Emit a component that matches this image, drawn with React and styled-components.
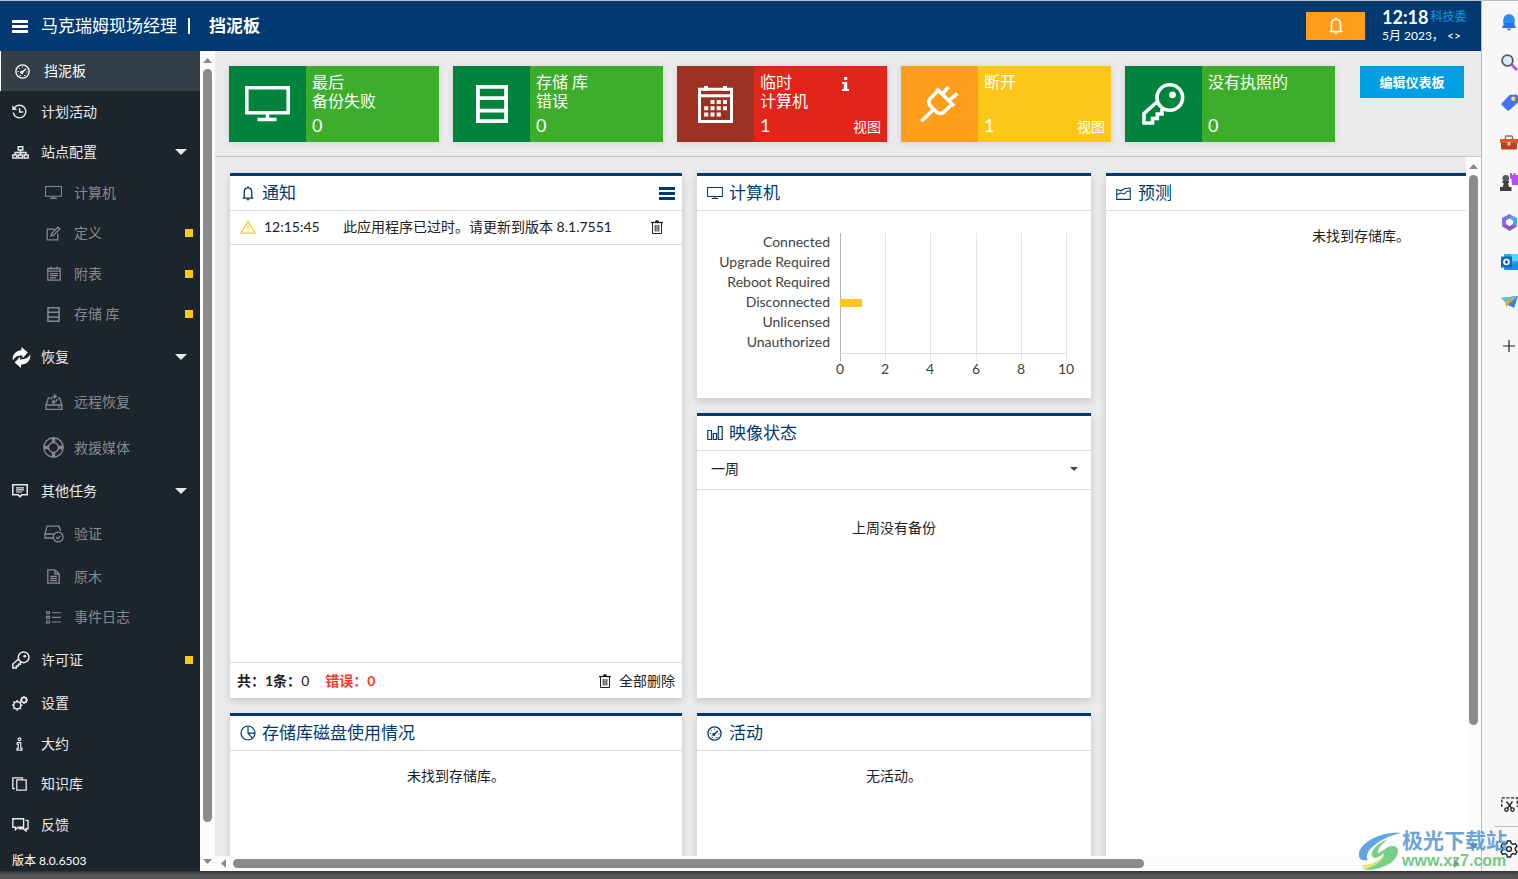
import React from 'react'
import styled, { createGlobalStyle, css } from 'styled-components'

const GlobalStyle = createGlobalStyle`
    * {
        box-sizing: border-box;
    }
    body {
        margin: 0;
        overflow: hidden;
        font-family: Lato, "Noto Sans CJK SC", sans-serif;
        font-size: 14px;
        line-height: 20px;
        color: #212121;
    }
    button, select {
        font-family: inherit;
        font-size: inherit;
        color: inherit;
        background: none;
        border: 0;
        padding: 0;
        cursor: pointer;
    }
    a {
        color: inherit;
        text-decoration: none;
    }
    svg {
        display: block;
        flex: none;
    }
`

const Page = styled.div`
    height: 100vh;
    display: flex;
    flex-direction: column;
    background: #555;
    padding-bottom: 8px;
`

const Window = styled.div`
    flex: 1;
    min-height: 0;
    display: flex;
    border-top: 1px solid #b9c0c8;
    box-shadow: 0 1px 3px #222;
`

const Site = styled.div`
    flex: 1;
    min-width: 0;
    display: flex;
    flex-direction: column;
    background: #eaebed;
`

const Header = styled.header`
    height: 50px;
    flex: none;
    display: flex;
    align-items: center;
    padding: 0 14px 0 12px;
    background: #003a70;
    color: #fff;
`

const Product = styled.span`
    margin-left: 13px;
    font-size: 17px;
`

const Divider = styled.span`
    width: 2px;
    height: 16px;
    margin: 0 19px 0 11px;
    background: #fff;
`

const PageTitle = styled.h1`
    margin: 0;
    font-size: 17px;
    line-height: 20px;
    font-weight: 700;
`

const AlertButton = styled.button`
    width: 59px;
    height: 28px;
    margin-left: auto;
    display: flex;
    align-items: center;
    justify-content: center;
    background: #ff9e1b;
    color: #fff;
`

const Clock = styled.div`
    width: 85px;
    margin-left: 17px;
    padding-top: 2px;
    font-size: 12px;
    line-height: 20px;
    white-space: nowrap;
`

const Time = styled.div`
    display: flex;
    align-items: center;
    gap: 2px;
    line-height: 18px;
    color: #009fe3;

    strong {
        font-size: 18px;
        color: #fff;
    }
`

const Columns = styled.div`
    flex: 1;
    min-height: 0;
    display: flex;
`

const Sidebar = styled.nav`
    width: 200px;
    flex: none;
    display: flex;
    flex-direction: column;
    overflow: hidden;
    background: #1d252c;
    color: #e8e9ea;
`

const NavLink = styled.a`
    flex: 1 0 ${(p) => (p.$tall ? 45 : 40)}px;
    display: flex;
    align-items: center;
    padding: 0 7px 0 ${(p) => (p.$sub ? 44 : 12)}px;
    color: ${(p) => (p.$sub ? '#85898c' : '#e8e9ea')};
    ${(p) =>
        p.$active &&
        css`
            padding-left: 14px;
            border-left: 1px solid #fff;
            background: #333f48;
            color: #fff;
        `}
`

const NavIcon = styled.span`
    flex: none;
    display: flex;
    ${(p) => (p.$sub ? 'width: 19px; margin-right: 11px; justify-content: center;' : 'width: 29px;')}
`

const Marker = styled.span`
    width: 8px;
    height: 8px;
    margin-left: auto;
    background: #ffc61a;
`

const Caret = styled.span`
    margin: 0 6px 0 auto;
    border: 6px solid transparent;
    border-top-color: #e8e9ea;
    border-bottom: 0;
`

const Version = styled.div`
    height: 26px;
    flex: none;
    padding: 6px 12px 0;
    font-size: 12px;
    color: #fff;
`

const Bar = styled.div`
    flex: none;
    display: flex;
    align-items: center;
    justify-content: space-between;
    background: #fcfcfc;
    ${(p) =>
        p.$horizontal
            ? 'height: 15px; padding: 0 20px 0 4px;'
            : 'width: 15px; flex-direction: column; padding: 7px 0;'}
`

const Track = styled.div`
    flex: 1;
    display: flex;
    ${(p) => (p.$horizontal ? 'margin: 0 5px;' : 'flex-direction: column; margin: 6px 0;')}
`

const Thumb = styled.div`
    border-radius: 5px;
    background: #8b8b8b;
    ${(p) => (p.$horizontal ? 'height: 9px; width: ' : 'width: 9px; height: ')}${(p) => p.$size};
`

const Main = styled.main`
    flex: 1;
    min-width: 0;
    display: flex;
    flex-direction: column;
`

const Summary = styled.section`
    height: 106px;
    flex: none;
    display: flex;
    justify-content: space-between;
    padding: 15px 17px 0 14px;
    border-bottom: 1px solid #c9cbcd;
`

const Tiles = styled.div`
    display: flex;
    gap: 14px;
`

const Tile = styled.article`
    width: 210px;
    height: 76px;
    display: flex;
    color: #fff;
    background: ${(p) => p.$color};
    box-shadow: 0 1px 8px rgba(0, 0, 0, 0.1);
`

const TileIcon = styled.div`
    width: 77px;
    flex: none;
    display: flex;
    align-items: center;
    justify-content: center;
    background: ${(p) => p.$color};
`

const TileBody = styled.div`
    flex: 1;
    display: flex;
    flex-direction: column;
    justify-content: space-between;
    padding: 6px 6px 5px;
`

const TileTop = styled.div`
    display: flex;
    justify-content: space-between;
    padding-right: 32px;
    font-size: 16px;
    line-height: 19px;
    white-space: pre-line;

    svg {
        margin-top: 5px;
    }
`

const TileBottom = styled.div`
    height: 20px;
    display: flex;
    justify-content: space-between;
    align-items: flex-start;

    span {
        font-size: 18px;
        line-height: 16px;
    }
`

const EditButton = styled.button`
    width: 104px;
    height: 32px;
    background: #009fe3;
    color: #fff;
    font-size: 13px;
    line-height: 20px;
    font-weight: 700;
`

const Board = styled.div`
    flex: 1;
    min-height: 0;
    display: flex;
`

const Scroller = styled.div`
    flex: 1;
    min-width: 0;
    overflow: hidden;
    padding: 16px 15px 0;
`

const Grid = styled.div`
    display: grid;
    grid-template-columns: minmax(452px, 37%) minmax(394px, 32%) minmax(510px, 41%);
    gap: 15px;
`

const Stack = styled.div`
    display: flex;
    flex-direction: column;
    gap: 15px;
`

const Card = styled.section`
    height: ${(p) => p.$height}px;
    display: flex;
    flex-direction: column;
    background: #fff;
    border-top: 3px solid #003a70;
    box-shadow: 0 3px 8px rgba(0, 0, 0, 0.16);
`

const CardHead = styled.header`
    height: 35px;
    flex: none;
    display: flex;
    align-items: center;
    gap: 6px;
    padding: 0 7px 0 9px;
    border-bottom: 1px solid #dcddde;
    color: #003a70;

    h2 {
        margin: 0;
        font-size: 17px;
        line-height: 20px;
        font-weight: 400;
    }
    button {
        margin-left: auto;
    }
`

const HeadIcon = styled.span`
    width: 17px;
    display: flex;
    justify-content: center;
`

const Notice = styled.div`
    height: 34px;
    display: flex;
    align-items: center;
    padding: 0 19px 2px 10px;
    border-bottom: 1px solid #dcddde;

    time {
        width: 79px;
        margin-left: 8px;
    }
    button {
        margin-left: auto;
    }
`

const Totals = styled.footer`
    height: 36px;
    margin-top: auto;
    display: flex;
    align-items: center;
    padding: 0 7px;
    border-top: 1px solid #dcddde;

    b {
        font-weight: 700;
    }
`

const Errors = styled.b`
    margin-left: 16px;
    color: #ff3b30;
`

const ClearButton = styled.button`
    margin-left: auto;
    display: flex;
    align-items: center;
    gap: 8px;
    line-height: 20px;
`

const Empty = styled.p`
    margin: 0;
    padding-top: ${(p) => (p.$roomy ? 28 : 15)}px;
    text-align: center;
`

const Period = styled.div`
    height: 39px;
    display: flex;
    align-items: center;
    padding: 0 13px 2px 14px;
    border-bottom: 1px solid #dcddde;

    select {
        flex: 1;
        height: 20px;
        line-height: 20px;
        appearance: none;
        outline: 0;
    }
    span {
        border: 4px solid transparent;
        border-top-color: #444;
        border-bottom: 0;
    }
`

const ChartSvg = styled.svg`
    align-self: center;
    font-size: 14px;
    fill: #424242;
`

const BrowserBar = styled.aside`
    width: 37px;
    flex: none;
    display: flex;
    flex-direction: column;
    overflow: hidden;
    padding: 1px 0 2px 18px;
    background: #f7f7f7;
    border-left: 1px solid #bdbdbd;
`

const BrowserButton = styled.button`
    width: 18px;
    height: 40px;
    margin-top: ${(p) => (p.$apart ? 4 : 0)}px;
    flex: none;
    display: flex;
    align-items: center;
    justify-content: center;
    color: #222;
`

const Spacer = styled.div`
    flex: 1;
`

const Rule = styled.div`
    height: 1px;
    flex: none;
    margin: 2px 0 2px -5px;
    background: #bdbdbd;
`

const Watermark = styled.div`
    position: absolute;
    right: 11px;
    bottom: 8px;
    display: flex;
    align-items: center;
    opacity: 0.8;
    pointer-events: none;
`

const WatermarkText = styled.div`
    font-family: "Liberation Sans", "Noto Sans CJK SC", sans-serif;
    line-height: 20px;
    white-space: nowrap;

    b {
        display: block;
        font-size: 21px;
        font-weight: 700;
        color: #4a8fd0;
    }
    span {
        display: block;
        font-size: 16px;
        font-weight: 700;
        color: #52bd6c;
    }
`

// every drawing: [width, height, stroke width, content]
const drawings = {
    menu: [16, 13, 3, <path d="M0 1.5H16M0 6.5H16M0 11.5H16" />],
    bell: [14, 18, 1.6, <><path d="M.5 14.5H13.5M2.5 14.5V7.2C2.5 4.2 4.5 2.2 7 2.2S11.5 4.2 11.5 7.2V14.5M7 .3V2" /><path d="M5 15.5H9L7 17.6Z" fill="currentColor" stroke="none" /></>],
    gauge: [15, 15, 1.3, <><circle cx="7.5" cy="7.5" r="6.6" /><path d="M7.2 8.2L11 4.8" /><circle cx="6.8" cy="8.4" r="1" /><path d="M2.6 7.5H3.8M11.4 8H12.5M7.5 2.5V3.6M4 4L4.7 4.7M4.6 11.4H6M9 11.4H10.4" strokeWidth="1" /></>],
    history: [15, 15, 1.4, <><path d="M2.1 4.3A6.3 6.3 0 1 1 1.3 8.6M7.6 4V8H11.2" /><path d="M.3 1.2V6H5.2Z" fill="currentColor" stroke="none" /></>],
    sitemap: [17, 13, 1.4, <path d="M6.2.8H10.8V4H6.2ZM8.5 4V9M3 9V6.5H14V9M.8 9H4.8V12H.8ZM6.5 9H10.5V12H6.5ZM12.2 9H16.2V12H12.2Z" />],
    monitor: [45, 36, 3.6, <path d="M1.8 1.8H43.2V26.8H1.8ZM22.5 27V33M12.5 33.5H31.5" />],
    screen: [17, 13, 1.1, <path d="M.5 .5H16.5V10.2H.5ZM8.5 10.5V12M5 12.4H12" />],
    edit: [15, 15, 1.3, <path d="M8.5 3.2H1.2V13.8H11.8V7.5M5 10L5.8 7.3L12 1.2L13.8 3L7.6 9.2Z" />],
    schedule: [14, 15, 1.3, <path d="M.8 2.5H13.2V14.2H.8ZM.8 5.2H13.2M4 .5V3.5M10 .5V3.5M3 7.7H11M3 9.7H11M3 11.8H9" />],
    storage: [32, 38, 3.8, <path d="M1.9 1.9H30.1V36.1H1.9ZM1.9 13.2H30.1M1.9 25.6H30.1" />],
    restore: [19, 21, 1, <path d="M9.5 0L15.8 5.6L10.5 11.2V8.6C6.5 8.3 3 9.5 .8 13.5C0 8 3.5 3.8 9.5 3.3ZM9 21L2.7 15.4L8 9.8V12.4C12.5 12.5 15.8 11.5 18.2 7.5C19 13 15.5 17.3 9 17.7Z" fill="#fff" stroke="none" />],
    drive: [18, 16, 1.3, <path d="M5 3.8H3.5L1 11V15.3H17V11L14.5 3.8H13M1 11H17M13.3 13.2H15M6 5.5C6 3.5 7.5 2.4 10 2.4M9 .4L11.2 2.4L9 4.4M12 5C12 7 10.5 8 8.3 8M9.3 6L7.2 8L9.3 10" />],
    lifebuoy: [21, 21, 1.4, <><circle cx="10.5" cy="10.5" r="9.7" /><circle cx="10.5" cy="10.5" r="5" /><path d="M10.5 1V5.5M10.5 15.5V20M1 10.5H5.5M15.5 10.5H20" strokeWidth="3.4" /></>],
    tasks: [16, 14, 1.5, <><path d="M.8.8H15.2V10.8H9.8L8 12.8L6.2 10.8H.8Z" /><path d="M4 3.8H12M4 5.9H12M4 8H10" strokeWidth="1.2" /></>],
    verify: [20, 18, 1.3, <><path d="M9 13H1V9L3 1.2H15L16.6 6M1 9H9.5" /><circle cx="14.2" cy="12" r="4.9" /><path d="M12 12L13.7 13.7L16.6 10.6" /></>],
    file: [13, 15, 1.3, <path d="M.8.8H8L12.2 5V14.2H.8ZM8 .8V5H12.2M3.2 7.4H9.8M3.2 9.5H9.8M3.2 11.6H9.8" />],
    list: [15, 13, 1.1, <path d="M.6 .8H3.6V2.8H.6ZM.6 5.4H3.6V7.4H.6ZM.6 10H3.6V12H.6ZM6 1.8H15M6 6.4H15M6 11H15" />],
    key: [43, 42, 3.6, <><circle cx="27.8" cy="14.5" r="12.8" /><circle cx="30.5" cy="11.8" r="3.4" fill="currentColor" stroke="none" /><path d="M15.5 18.5L2 30.5V40H10.5V35.5H15.3V31H20V26" /></>],
    gears: [16, 15, 1.5, <><circle cx="5.2" cy="9.3" r="3.6" /><circle cx="12" cy="4" r="2.5" /><path d="M5.2 4V5.4M5.2 13.2V14.7M0 9.3H1.4M9 9.3H10.4M1.5 5.6L2.6 6.7M7.8 12L8.9 13M8.9 5.6L7.8 6.7M1.5 13L2.6 12M12 0V1.3M12 6.7V8M8 4H9.3M14.7 4H16M9.3 1.2L10.2 2.1M13.8 6L14.7 6.8M14.7 1.2L13.8 2.1" /></>],
    infoOutline: [15, 14, 1.2, <><circle cx="7.5" cy="2.2" r="1.4" /><path d="M5.2 5.6H8.8V11.3H10V13.2H5V11.3H6.2V7.4H5.2Z" /></>],
    info: [7, 14, 1, <path d="M2 0H5.2V3H2ZM0 5H5.2V12H7V14H0V12H1.8V7H0Z" fill="currentColor" stroke="none" />],
    copy: [15, 14, 1.3, <path d="M4.8 2.8H14.2V13.2H4.8ZM3 11.6H.8V.8H10.5V2.6" />],
    chat: [17, 14, 1.4, <path d="M.8.8H11.6V9.2H6L3.4 11.6V9.2H.8ZM13.4 2.4H16V10.8H14V13L11.4 10.8H6.5" />],
    warning: [16, 14, 1.2, <path d="M8 1.2L15 13.2H1ZM8 5.2V9.6M8 10.7V12" />],
    trash: [12, 14, 1, <><path d="M0 2.5H12" strokeWidth="1.3" /><path d="M1.5 3V13.5H10.5V3M4.2 5V11.5M6 5V11.5M7.8 5V11.5" /><path d="M3.8 2.5L4.8 .2H7.2L8.2 2.5Z" fill="currentColor" stroke="none" /></>],
    calendar: [35, 37, 3, <><path d="M1.5 3.2H33.5V35.5H1.5ZM1.5 9.8H33.5" /><path d="M8 0V5M27 0V5" strokeWidth="4" /><path d="M12.5 16H29M6.2 22.3H29M6.2 28.6H23" strokeWidth="4" strokeDasharray="4 2.3" /></>],
    plug: [39, 38, 3.6, <path d="M16.5 3.5L34 21M18.5 5.5L10.3 13.5Q7 17 10.3 20.8L16.5 27Q20.3 30 24 27L32 19M13.5 24.5L1.3 36.3M22.3 9L28.5 1.8M29 15.3L37.3 8.5" />],
    bars: [16, 15, 1.2, <path d="M.8 4.5H4.5V13.5H.8ZM6.3 7.5H9.5V13.5H6.3ZM11.3 .6H15.2V13.5H11.3Z" />],
    forecast: [15, 13, 1.1, <path d="M.8 2.5L5 3.8L9 1.5L14.2 1V12.4H.8ZM.8 8L4.2 6L8.5 7L10.8 4.2L14.2 4" />],
    pie: [16, 16, 1.2, <><circle cx="8" cy="8" r="7" /><path d="M8 1V8.2H15M8 8.2L12.6 13.3" /></>],
    plus: [12, 12, 1.2, <path d="M0 6H12M6 0V12" />],
    snip: [17, 15, 1.3, <><path d="M.8 10V.8H16.2V10" strokeDasharray="3 1.6" /><path d="M5.5 4.5L10.5 11.2M11.5 4.5L6.5 11.2" /><circle cx="5.5" cy="12.6" r="1.7" /><circle cx="11.5" cy="12.6" r="1.7" /></>],
    cog: [18, 18, 1.4, <><path d="M7.4 1H10.6L11.2 3.4L13 4.4L15.4 3.6L17 6.4L15.3 8.1V9.9L17 11.6L15.4 14.4L13 13.6L11.2 14.6L10.6 17H7.4L6.8 14.6L5 13.6L2.6 14.4L1 11.6L2.7 9.9V8.1L1 6.4L2.6 3.6L5 4.4L6.8 3.4Z" strokeLinejoin="round" /><circle cx="9" cy="9" r="2.4" /></>],
    colorBell: [14, 17, 0, <><path d="M0 14L1.5 11V6C1.5 2.5 4 .5 7 .5S12.5 2.5 12.5 6V11L14 14Z" fill="#2372e8" /><path d="M1.5 9V6C1.5 2.5 4 .5 7 .5S12.5 2.5 12.5 6V9Z" fill="#2c8df0" /><path d="M4.5 14.5H9.5L7.5 16.5H6.5Z" fill="#6b6f76" /></>],
    colorSearch: [17, 17, 0, <><circle cx="6.5" cy="6.5" r="5.4" fill="#d6ecfa" stroke="#5b5f66" strokeWidth="1.8" /><path d="M10.5 10.5L16 16" stroke="#b455e8" strokeWidth="3" /></>],
    colorTag: [17, 17, 0, <><path d="M8.5 1L15.5 .5Q17 1 17 3V8.5L8 16.5Q7 17 6 16L.6 11Q0 10 1 9Z" fill="#4272f5" /><circle cx="12.3" cy="4.7" r="2.2" fill="#ffe04a" /></>],
    colorCase: [18, 15, 0, <><path d="M5.5 4.5V2Q5.5 1 6.5 1H11.5Q12.5 1 12.5 2V4.5" fill="none" stroke="#777" strokeWidth="1.4" /><path d="M1 7H17V13Q17 14.5 15.5 14.5H2.5Q1 14.5 1 13Z" fill="#c23f17" /><path d="M0 4H18V8H0Z" fill="#e0592a" /><path d="M7.5 7H10.5V10.5H7.5Z" fill="#c9ccd0" /></>],
    colorChess: [18, 18, 0, <><path d="M10 0H12V2H13.5V0H15.5V2H18V12H12L11.5 6L10 5Z" fill="#b64ff2" /><circle cx="5.8" cy="5.3" r="3.3" fill="#55585c" /><path d="M2.5 8H9V10H8L9 14H11.5V18H0V14H2.8L3.8 10H2.5Z" fill="#3c3f43" /></>],
    colorOffice: [17, 17, 0, <><path d="M8.5 0L1 4V12L5 14V6.5L12 2.5Z" fill="#8a6fe0" /><path d="M8.5 0L16 4V12.5L12 10V6.5L8.5 4.5L12 2Z" fill="#3fb0ec" /><path d="M1 12L8.5 17L16 12.5L12 10L8.5 12.2L5 10Z" fill="#8f55c9" /></>],
    colorOutlook: [17, 16, 0, <><path d="M3 0H17V16H3Z" fill="#28a8ea" /><path d="M10 0H17V7H10Z" fill="#50d9ff" /><path d="M3 15L17 8V16H3Z" fill="#1490df" /><path d="M0 2.5H11V13.5H0Z" fill="#0f6cbd" /><circle cx="5.5" cy="8" r="2.5" fill="none" stroke="#fff" strokeWidth="1.6" /></>],
    colorPlane: [17, 13, 0, <><path d="M0 2L17 0L13 12L8 9.5Z" fill="#2b86e6" /><path d="M0 2L17 0L5 6Z" fill="#4cc2f5" /><path d="M4 5.5L17 0L7.5 8L5.5 12Z" fill="#f8a51b" /></>],
}

const Icon = ({ name, width }) => {
    const [w, h, stroke, content] = drawings[name]
    const size = width || w
    return (
        <svg
            width={size}
            height={Math.round((h * size) / w)}
            viewBox={`0 0 ${w} ${h}`}
            fill="none"
            stroke={stroke ? 'currentColor' : 'none'}
            strokeWidth={stroke}
            aria-hidden="true"
        >
            {content}
        </svg>
    )
}

const navItems = [
    { text: '挡泥板', icon: 'gauge', active: true },
    { text: '计划活动', icon: 'history' },
    { text: '站点配置', icon: 'sitemap', group: true },
    { text: '计算机', icon: 'screen', sub: true },
    { text: '定义', icon: 'edit', sub: true, marked: true },
    { text: '附表', icon: 'schedule', sub: true, marked: true },
    { text: '存储 库', icon: 'storage', size: 13, sub: true, marked: true },
    { text: '恢复', icon: 'restore', group: true, tall: true },
    { text: '远程恢复', icon: 'drive', sub: true, tall: true },
    { text: '救援媒体', icon: 'lifebuoy', sub: true, tall: true },
    { text: '其他任务', icon: 'tasks', group: true },
    { text: '验证', icon: 'verify', sub: true, tall: true },
    { text: '原木', icon: 'file', sub: true },
    { text: '事件日志', icon: 'list', sub: true },
    { text: '许可证', icon: 'key', size: 18, marked: true, tall: true },
    { text: '设置', icon: 'gears' },
    { text: '大约', icon: 'infoOutline' },
    { text: '知识库', icon: 'copy' },
    { text: '反馈', icon: 'chat' },
]

const green = ['#00843d', '#3dae2b']

const tiles = [
    { label: '最后\n备份失败', count: 0, icon: 'monitor', colors: green },
    { label: '存储 库\n错误', count: 0, icon: 'storage', colors: green },
    { label: '临时\n计算机', count: 1, icon: 'calendar', colors: ['#9d3223', '#e1251b'], info: true, view: true },
    { label: '断开', count: 1, icon: 'plug', colors: ['#ff9e1b', '#fcc719'], view: true },
    { label: '没有执照的', count: 0, icon: 'key', colors: green },
]

const states = [
    ['Connected', 0],
    ['Upgrade Required', 0],
    ['Reboot Required', 0],
    ['Disconnected', 1],
    ['Unlicensed', 0],
    ['Unauthorized', 0],
]

const browserTools = [
    ['通知', 'colorBell'],
    ['搜索', 'colorSearch'],
    ['购物', 'colorTag'],
    ['工具', 'colorCase'],
    ['游戏', 'colorChess'],
    ['Microsoft 365', 'colorOffice'],
    ['Outlook', 'colorOutlook'],
    ['Drop', 'colorPlane'],
]

const Arrow = ({ turn }) => (
    <svg width="9" height="5" viewBox="0 0 9 5" overflow="visible" aria-hidden="true">
        <path d="M4.5 0L9 5H0Z" fill="#8b8b8b" transform={`rotate(${turn} 4.5 2.5)`} />
    </svg>
)

const Scrollbar = ({ horizontal, size }) => (
    <Bar $horizontal={horizontal}>
        <Arrow turn={horizontal ? -90 : 0} />
        <Track $horizontal={horizontal}>
            <Thumb $horizontal={horizontal} $size={size} />
        </Track>
        <Arrow turn={horizontal ? 90 : 180} />
    </Bar>
)

const Panel = ({ title, icon, iconWidth, height, action, children }) => (
    <Card $height={height}>
        <CardHead>
            <HeadIcon><Icon name={icon} width={iconWidth} /></HeadIcon>
            <h2>{title}</h2>
            {action}
        </CardHead>
        {children}
    </Card>
)

const MachineChart = () => (
    <ChartSvg width="394" height="187" viewBox="0 0 394 187" role="img" aria-label="计算机">
        {[0, 2, 4, 6, 8, 10].map((n) => {
            const x = 143.5 + Math.round(n * 22.6)
            return (
                <g key={n}>
                    <path d={`M${x} 22V150`} stroke={n ? '#e5e5e5' : '#b5b5b5'} />
                    <text x={x - 0.5} y="163" textAnchor="middle">{n}</text>
                </g>
            )
        })}
        <path d="M143 142.5H370" stroke="#dcdcdc" />
        {states.map(([label, value], i) => (
            <g key={label}>
                <text x="133" y={36 + i * 20} textAnchor="end">{label}</text>
                {value > 0 && <rect x="143" y={28 + i * 20} width={value * 22} height="8" fill="#fcc719" />}
            </g>
        ))}
    </ChartSvg>
)

const App = () => {
    return (
        <Page>
            <GlobalStyle />
            <Window>
                <Site>
                    <Header>
                        <button aria-label="菜单"><Icon name="menu" /></button>
                        <Product>马克瑞姆现场经理</Product>
                        <Divider />
                        <PageTitle>挡泥板</PageTitle>
                        <AlertButton aria-label="通知"><Icon name="bell" /></AlertButton>
                        <Clock>
                            <Time><strong>12:18</strong>科技委</Time>
                            5月 2023， &lt;&gt;
                        </Clock>
                    </Header>
                    <Columns>
                        <Sidebar>
                            {navItems.map((item) => (
                                <NavLink key={item.text} href="#" $sub={item.sub} $tall={item.tall} $active={item.active}>
                                    <NavIcon $sub={item.sub}><Icon name={item.icon} width={item.size} /></NavIcon>
                                    {item.text}
                                    {item.group && <Caret />}
                                    {item.marked && <Marker />}
                                </NavLink>
                            ))}
                            <Version>版本 8.0.6503</Version>
                        </Sidebar>
                        <Scrollbar size="96%" />
                        <Main>
                            <Summary>
                                <Tiles>
                                    {tiles.map((tile) => (
                                        <Tile key={tile.label} $color={tile.colors[1]}>
                                            <TileIcon $color={tile.colors[0]}><Icon name={tile.icon} /></TileIcon>
                                            <TileBody>
                                                <TileTop>
                                                    {tile.label}
                                                    {tile.info && <Icon name="info" />}
                                                </TileTop>
                                                <TileBottom>
                                                    <span>{tile.count}</span>
                                                    {tile.view && <a href="#">视图</a>}
                                                </TileBottom>
                                            </TileBody>
                                        </Tile>
                                    ))}
                                </Tiles>
                                <EditButton>编辑仪表板</EditButton>
                            </Summary>
                            <Board>
                                <Scroller>
                                    <Grid>
                                        <Stack>
                                            <Panel
                                                title="通知"
                                                icon="bell"
                                                iconWidth={12}
                                                height={525}
                                                action={<button aria-label="菜单"><Icon name="menu" /></button>}
                                            >
                                                <Notice>
                                                    <svg width="16" height="14" viewBox="0 0 16 14" fill="none" stroke="#fcc719" strokeWidth="1.2">
                                                        {drawings.warning[3]}
                                                    </svg>
                                                    <time>12:15:45</time>
                                                    此应用程序已过时。请更新到版本 8.1.7551
                                                    <button aria-label="删除"><Icon name="trash" /></button>
                                                </Notice>
                                                <Totals>
                                                    <b>共：1条：</b>0
                                                    <Errors>错误：0</Errors>
                                                    <ClearButton><Icon name="trash" />全部删除</ClearButton>
                                                </Totals>
                                            </Panel>
                                            <Panel title="存储库磁盘使用情况" icon="pie" height={285}>
                                                <Empty>未找到存储库。</Empty>
                                            </Panel>
                                        </Stack>
                                        <Stack>
                                            <Panel title="计算机" icon="screen" iconWidth={16} height={225}>
                                                <MachineChart />
                                            </Panel>
                                            <Panel title="映像状态" icon="bars" height={285}>
                                                <Period>
                                                    <select aria-label="期间"><option>一周</option></select>
                                                    <span />
                                                </Period>
                                                <Empty $roomy>上周没有备份</Empty>
                                            </Panel>
                                            <Panel title="活动" icon="gauge" height={285}>
                                                <Empty>无活动。</Empty>
                                            </Panel>
                                        </Stack>
                                        <Panel title="预测" icon="forecast" height={825}>
                                            <Empty>未找到存储库。</Empty>
                                        </Panel>
                                    </Grid>
                                </Scroller>
                                <Scrollbar size="83%" />
                            </Board>
                            <Scrollbar horizontal size="75%" />
                        </Main>
                    </Columns>
                </Site>
                <BrowserBar>
                    {browserTools.map(([label, icon]) => (
                        <BrowserButton key={label} aria-label={label}><Icon name={icon} /></BrowserButton>
                    ))}
                    <BrowserButton $apart aria-label="自定义"><Icon name="plus" /></BrowserButton>
                    <Spacer />
                    <BrowserButton aria-label="截图"><Icon name="snip" /></BrowserButton>
                    <Rule />
                    <BrowserButton aria-label="设置"><Icon name="cog" /></BrowserButton>
                </BrowserBar>
            </Window>
            <Watermark>
                <svg width="44" height="40" viewBox="0 0 44 40" aria-hidden="true">
                    <path d="M43 2C24 0 3 11 1 22C0 29 5 30 10 29C5 22 18 8 43 2Z" fill="#3d8fd6" />
                    <path d="M31 8C20 11 12 20 14 25C16 29 22 26 26 22C27 28 18 34 6 39C24 40 40 30 40 20C40 15 35 14 30 16C26 18 23 21 20 22C19 18 25 11 31 8Z" fill="#58c46c" />
                    <path d="M4 34C14 34 24 29 26 22C27 28 18 34 6 39Z" fill="#d8e05a" />
                </svg>
                <WatermarkText>
                    <b>极光下载站</b>
                    <span>www.xz7.com</span>
                </WatermarkText>
            </Watermark>
        </Page>
    )
}

export default App
